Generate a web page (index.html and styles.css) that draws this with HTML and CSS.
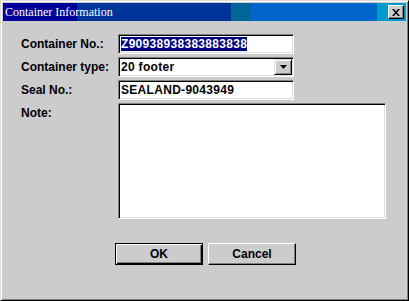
FILE: index.html
```html
<!DOCTYPE html>
<html lang="en">
<head>
    <title>Container Information</title>
    <meta charset="UTF-8">
    <link rel="stylesheet" href="styles.css">
</head>
<body>
    <div class="window">
        <div class="titlebar">
            <span class="title">Container Information</span>
            <span class="close">
                <svg width="8" height="7" viewBox="0 0 8 7">
                    <path d="M0 0h2l2 2.5L6 0h2L5 3.5 8 7H6L4 4.5 2 7H0l3-3.5z" fill="#000"/>
                </svg>
            </span>
        </div>
        <div class="content">
            <div class="form">
                <label class="label">Container No.:</label>
                <div class="field"><span class="selected">Z90938938383883838</span></div>

                <label class="label">Container type:</label>
                <div class="field combo">
                    <span>20 footer</span>
                    <span class="drop">
                        <svg width="7" height="4" viewBox="0 0 7 4"><path d="M0 0h7L3.5 4z" fill="#000"/></svg>
                    </span>
                </div>

                <label class="label">Seal No.:</label>
                <div class="field">SEALAND-9043949</div>

                <label class="label note-label">Note:</label>
                <div class="field memo"></div>
            </div>
            <div class="buttons">
                <button class="btn default">OK</button>
                <button class="btn">Cancel</button>
            </div>
        </div>
    </div>
</body>
</html>
```

FILE: styles.css
```css
body {
    margin: 0;
    background-color: #cccccc;
    font-family: 'Liberation Sans', Arial, sans-serif;
    font-weight: bold;
    font-size: 12px;
    color: #000;
}

.window {
    width: 409px;
    height: 301px;
    box-sizing: border-box;
    border: 1px solid;
    border-color: #dfdfdf #000 #000 #dfdfdf;
    box-shadow: inset 1px 1px #fff, inset -1px -1px #808080;
    padding: 2px;
    background-color: #cccccc;
}

.titlebar {
    height: 18px;
    display: flex;
    align-items: center;
    justify-content: space-between;
    padding: 0 2px;
    background: linear-gradient(to right,
        #000099 0, #000099 74px,
        #003399 74px, #003399 228px,
        #006699 228px, #006699 248px,
        #0066cc 248px, #0066cc 374px,
        #0099cc 374px, #0099cc 100%);
}

.title {
    font-family: 'Liberation Serif', 'Times New Roman', serif;
    font-weight: normal;
    font-size: 12px;
    color: #fff;
}

.close {
    width: 16px;
    height: 14px;
    box-sizing: border-box;
    background-color: #cccccc;
    border: 1px solid;
    border-color: #fff #000 #000 #fff;
    box-shadow: inset -1px -1px #808080;
    display: flex;
    align-items: center;
    justify-content: center;
}

.content {
    padding: 13px 0 0 18px;
}

.form {
    display: grid;
    grid-template-columns: 97px auto;
    row-gap: 3px;
    align-items: center;
    justify-items: start;
}

.field {
    width: 176px;
    height: 20px;
    box-sizing: border-box;
    background-color: #fff;
    border: 1px solid;
    border-color: #808080 #fff #fff #808080;
    box-shadow: inset 1px 1px #000, inset -1px -1px #dfdfdf;
    padding: 0 2px;
    display: flex;
    align-items: center;
    white-space: nowrap;
    letter-spacing: 0.3px;
}

.selected {
    background-color: #000080;
    color: #fff;
    line-height: 14px;
}

.combo {
    justify-content: space-between;
    padding-right: 1px;
}

.drop {
    width: 18px;
    height: 16px;
    box-sizing: border-box;
    background-color: #cccccc;
    border: 1px solid;
    border-color: #dfdfdf #000 #000 #dfdfdf;
    box-shadow: inset 1px 1px #fff, inset -1px -1px #808080;
    display: flex;
    align-items: center;
    justify-content: center;
}

.memo {
    width: 268px;
    height: 116px;
}

.note-label {
    align-self: start;
    margin-top: 3px;
}

.buttons {
    display: flex;
    justify-content: center;
    gap: 5px;
    margin-top: 24px;
    margin-left: -16px;
}

.btn {
    width: 88px;
    height: 22px;
    box-sizing: border-box;
    font-family: 'Liberation Sans', Arial, sans-serif;
    font-weight: bold;
    font-size: 12px;
    color: #000;
    background-color: #cccccc;
    border: 1px solid;
    border-color: #fff #000 #000 #fff;
    box-shadow: inset -1px -1px #808080;
    padding: 0;
}

.btn.default {
    border-color: #000;
    box-shadow: inset 1px 1px #fff, inset -1px -1px #000, inset -2px -2px #808080;
}
```
